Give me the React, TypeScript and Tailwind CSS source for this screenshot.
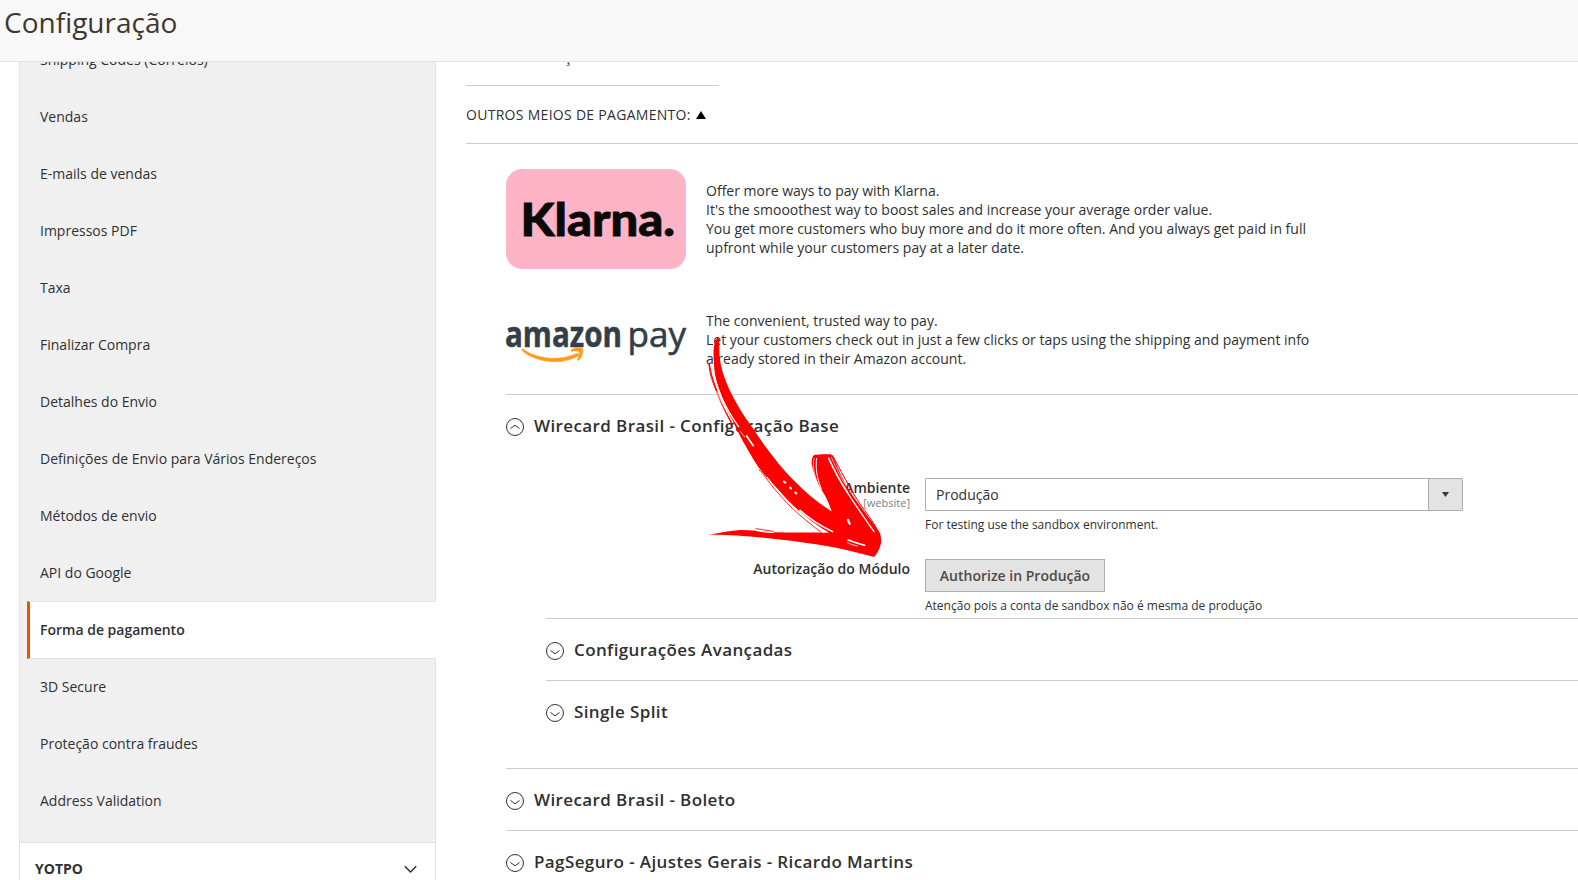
import type { ReactNode } from "react";

const navItems = [
  "Shipping Codes (Correios)",
  "Vendas",
  "E-mails de vendas",
  "Impressos PDF",
  "Taxa",
  "Finalizar Compra",
  "Detalhes do Envio",
  "Definições de Envio para Vários Endereços",
  "Métodos de envio",
  "API do Google",
  "Forma de pagamento",
  "3D Secure",
  "Proteção contra fraudes",
  "Address Validation",
];
const activeItem = "Forma de pagamento";

function NavItem({ label }: { label: string }) {
  if (label === activeItem) {
    return (
      <li className="-mr-px ml-[7px] flex h-[58px] -mb-px items-center border-y border-l-[3px] border-y-[#e3e3e3] border-l-[#eb5202] bg-white pl-[10px] font-semibold text-[#303030]">
        {label}
      </li>
    );
  }
  return <li className="flex h-[57px] items-center pl-5">{label}</li>;
}

function Sidebar() {
  return (
    <aside className="ml-[19px] w-[417px] shrink-0 border-x border-[#e3e3e3]">
      <ul className="h-[811px] bg-[#f0f0f0]">
        {navItems.map((label) => (
          <NavItem key={label} label={label} />
        ))}
      </ul>
      <div className="flex h-[62px] items-start justify-between border-t border-[#e3e3e3] bg-white pt-4 pr-[18px] pl-[15px] font-bold text-[#303030]">
        <span>YOTPO</span>
        <svg className="mt-[6px]" width="13" height="9" viewBox="0 0 13 9" fill="none" stroke="#303030" strokeWidth="1.5">
          <path d="M.8 1.3 6.5 7l5.7-5.7" />
        </svg>
      </div>
    </aside>
  );
}

function SectionTitle({ children, open = false }: { children: ReactNode; open?: boolean }) {
  return (
    <h2 className="flex h-[23px] items-center gap-[10px] text-[17px] font-semibold tracking-[0.39px] text-[#303030]">
      <svg className="shrink-0" width="18" height="18" viewBox="0 0 18 18" fill="none" stroke="#303030">
        <circle cx="9" cy="9" r="8.5" />
        <path d={open ? "M4.500 10.500 9 7.200l4.500 3.300" : "M4.500 8.500 9 11.800l4.500-3.300"} />
      </svg>
      <span>{children}</span>
    </h2>
  );
}

function GroupLabel({ children }: { children: ReactNode }) {
  return (
    <div className="flex items-center gap-[5px]">
      <span className="tracking-[0.29px]">{children}</span>
      <svg width="10" height="8" viewBox="0 0 10 8">
        <path d="M5 0 10 8H0Z" fill="#000000" />
      </svg>
    </div>
  );
}

function KlarnaLogo() {
  return (
    <svg width="180" height="100" viewBox="0 0 180 100" className="shrink-0">
      <rect width="180" height="100" rx="16" fill="#ffb3c7" />
      <text x="14.5" y="67" fontFamily="Lato" fontWeight="900" fontSize="46" fill="#0a0b09" stroke="#0a0b09" strokeWidth="0.8" textLength="154.500" lengthAdjust="spacingAndGlyphs">
        Klarna.
      </text>
    </svg>
  );
}

function AmazonPayLogo() {
  return (
    <svg width="180" height="60" viewBox="0 -20 180 60" className="shrink-0 overflow-visible">
      <text x="-1" y="22" fontFamily="Open Sans" fontWeight="700" fontSize="35" fill="#333e48" stroke="#333e48" strokeWidth="0.5" textLength="117" lengthAdjust="spacingAndGlyphs">amazon</text>
      <text x="121.500" y="22" fontFamily="Open Sans" fontWeight="400" fontSize="35" fill="#333e48" stroke="#333e48" strokeWidth="0.6" textLength="58.500" lengthAdjust="spacingAndGlyphs">pay</text>
      <path fill="#ff9a1f" stroke="#ff9a1f" strokeWidth="0.5" d="M17 24.200c15 10 36 12 53 4.500 2.500-1 4 .8 1.800 2.500C57 39.500 32 39 16.200 25.800c-1-.9-.4-2.200.8-1.600Z" />
      <path fill="#ff9a1f" stroke="#ff9a1f" strokeWidth="0.5" d="M65 25c3-2.600 9.500-3.200 11.400-1.600 1.500 2-.4 9.200-3.800 11.800-.8.600-1.300.2-1-.6 1-2.800 2.400-6.600 1.500-7.700-1-1.200-5-.9-7.500-.7-1 .1-1.300-.7-.6-1.200Z" />
    </svg>
  );
}

function PaymentOffer({ logo, children }: { logo: ReactNode; children: ReactNode }) {
  return (
    <div className="flex gap-5">
      {logo}
      <p className="w-[620px] leading-[19px]">{children}</p>
    </div>
  );
}

function FieldRow({ label, scope, children }: { label: string; scope?: string; children: ReactNode }) {
  return (
    <div className="flex gap-[15px]">
      <div className="w-[404px] shrink-0 pt-[1px] text-right">
        <div className="leading-[18px] font-semibold text-[#303030]">{label}</div>
        {scope && <div className="text-[11px] leading-[12px] text-[#808080]">[{scope}]</div>}
      </div>
      <div>{children}</div>
    </div>
  );
}

function Arrow() {
  return (
    <svg className="pointer-events-none absolute top-[320px] left-[690px]" width="220" height="250" viewBox="0 0 660 750">
      <g fill="#ff0000">
        <path d="M85 50C72 62 68 90 72 130c0 20 4 40 8 55 4 15 10 30 16 50 12 30 35 75 59 122 14 25 28 50 46 78 15 22 40 50 60 70 24 28 50 55 75 75 30 25 55 45 90 62l20-2 10-50C405 568 350 520 320 490c-25-25-50-52-70-80-20-25-42-55-60-84-15-20-28-38-40-58-16-28-30-52-40-78-10-25-16-45-20-70-3-28-2-45-2-60Z" />
        <path d="M427 582C420 555 408 530 395 510c-12-15-28-60-30-80-1-12 2-20 7-25 15-3 35-3 50-2 6 3 10 12 14 22 12 28 22 52 36 77 22 36 46 66 70 98 10 14 22 26 28 40 4 12 4 24 2 34-4 14-11 27-20 37-25-6-55-15-83-21-40-9-80-16-120-21-50-8-100-13-150-18-50-4-95-8-143-6 35-8 65-12 96-15 40 1 70 5 100 7 55 1 110 1 163 1Z" />
      </g>
      <g fill="none" stroke="#ff0000" strokeLinecap="round">
        <path d="M57 130c4 25 9 45 18 68 10 35 30 75 50 112" strokeWidth="4" />
        <path d="M57 132c1 30 12 60 24 85" strokeWidth="2.500" />
        <path d="M207 450c8 8 14 12 18 20 25 35 60 75 95 107 25 22 50 42 73 60" strokeWidth="2.500" />
        <path d="M198 626c18 4 34 4 52 8" strokeWidth="2.500" />
        <path d="M428 407c22 40 52 100 82 145 20 28 36 48 48 70" strokeWidth="3" />
      </g>
      <g fill="none" stroke="#ffffff" strokeLinecap="round">
        <path d="M66 145c7 30 17 58 28 85 14 33 32 62 52 90" strokeWidth="4" />
        <path d="M80 215c10 25 28 60 48 88" strokeWidth="2" />
        <path d="M170 348c6 10 12 18 20 29" strokeWidth="5" />
        <path d="M152 335c4 6 8 12 12 16" strokeWidth="2.500" />
        <path d="M232 472c22 30 50 62 80 92 22 20 45 38 66 52" strokeWidth="3" />
        <path d="M330 571c32 28 60 46 98 64" strokeWidth="4.500" />
        <path d="M380 415c-4 26 0 58 14 92" strokeWidth="3" />
        <path d="M372 415c-6 24 2 56 16 88" strokeWidth="2" />
        <path d="M416 415c14 30 32 66 56 102" strokeWidth="5" />
        <path d="M472 517c24 38 52 78 80 118" strokeWidth="4" />
        <path d="M424 412c12 26 26 56 44 86" strokeWidth="2" />
        <path d="M474 600c1 4 3 8 5 11" strokeWidth="7" />
        <path d="M474 660c16 6 34 12 50 16" strokeWidth="4.500" />
        <path d="M472 668c10 5 20 8 30 10" strokeWidth="2.500" />
        <path d="M200 632c16 4 34 5 50 6" strokeWidth="3" />
        <path d="M282 485l4 3M300 503l3 2M316 518l3 2" strokeWidth="6" />
      </g>
    </svg>
  );
}

export default function App() {
  return (
    <div className="relative flex h-[880px] w-[1578px] flex-col overflow-hidden bg-white font-['Open_Sans',sans-serif] text-sm text-[#303030]">
      <header className="z-10 h-[62px] shrink-0 border-b border-[#e3e3e3] bg-[#f8f8f8] pl-1">
        <h1 className="pt-[3px] text-[28px] leading-[38px] text-[#41362f]">Configuração</h1>
      </header>

      <div className="-mt-[31px] flex min-h-0 flex-1 items-start">
        <Sidebar />

        <main className="ml-[30px] w-[1112px] shrink-0">
          <div className="-mt-[3px] flex h-[58px] w-[253px] items-center border-b border-[#cccccc]">
            <GroupLabel>OUTRAS SOLUÇÕES:</GroupLabel>
          </div>
          <div className="flex h-[58px] items-center border-b border-[#cccccc]">
            <GroupLabel>OUTROS MEIOS DE PAGAMENTO:</GroupLabel>
          </div>

          <div className="pl-10">
            <div className="flex h-[251px] flex-col border-b border-[#cccccc] pt-[25px]">
              <div className="flex h-[128px] [&_p]:pt-[12px]">
                <PaymentOffer logo={<KlarnaLogo />}>
                  Offer more ways to pay with Klarna.
                  <br />
                  It's the smooothest way to boost sales and increase your average order value.
                  <br />
                  You get more customers who buy more and do it more often. And you always get paid in full
                  <br />
                  upfront while your customers pay at a later date.
                </PaymentOffer>
              </div>
              <div className="flex [&_p]:pt-[14px] [&_svg]:mt-[8px]">
                <PaymentOffer logo={<AmazonPayLogo />}>
                  The convenient, trusted way to pay.
                  <br />
                  Let your customers check out in just a few clicks or taps using the shipping and payment info
                  <br />
                  already stored in their Amazon account.
                </PaymentOffer>
              </div>
            </div>

            <section className="h-[374px] border-b border-[#cccccc] pt-5">
              <SectionTitle open>Wirecard Brasil - Configuração Base</SectionTitle>
              <div className="flex h-[180px] flex-col pt-[40px]">
                <div className="h-[81px]">
                  <FieldRow label="Ambiente" scope="website">
                    <div className="flex h-[33px] w-[538px] items-center justify-between rounded-[1px] border border-[#adadad] bg-white pl-[10px]">
                      <span>Produção</span>
                      <span className="flex h-full w-[34px] items-center justify-center border-l border-[#adadad] bg-[#e3e3e3]">
                        <svg width="7" height="5" viewBox="0 0 7 5">
                          <path d="M0 0h7L3.500 5Z" fill="#41362f" />
                        </svg>
                      </span>
                    </div>
                    <p className="mt-[6px] text-xs leading-4">For testing use the sandbox environment.</p>
                  </FieldRow>
                </div>
                <FieldRow label="Autorização do Módulo">
                  <button className="flex h-[33px] w-[180px] items-center justify-center border border-[#adadad] bg-[#e3e3e3] font-semibold text-[#514943]">
                    Authorize in Produção
                  </button>
                  <p className="mt-[6px] text-xs leading-4">Atenção pois a conta de sandbox não é mesma de produção</p>
                </FieldRow>
              </div>
              <div className="ml-10">
                <div className="h-[62px] border-t border-[#cccccc] pt-5">
                  <SectionTitle>Configurações Avançadas</SectionTitle>
                </div>
                <div className="border-t border-[#cccccc] pt-5">
                  <SectionTitle>Single Split</SectionTitle>
                </div>
              </div>
            </section>
            <section className="h-[62px] border-b border-[#cccccc] pt-5">
              <SectionTitle>Wirecard Brasil - Boleto</SectionTitle>
            </section>
            <section className="pt-5">
              <SectionTitle>PagSeguro - Ajustes Gerais - Ricardo Martins</SectionTitle>
            </section>
          </div>
        </main>
      </div>
      <Arrow />
    </div>
  );
}
